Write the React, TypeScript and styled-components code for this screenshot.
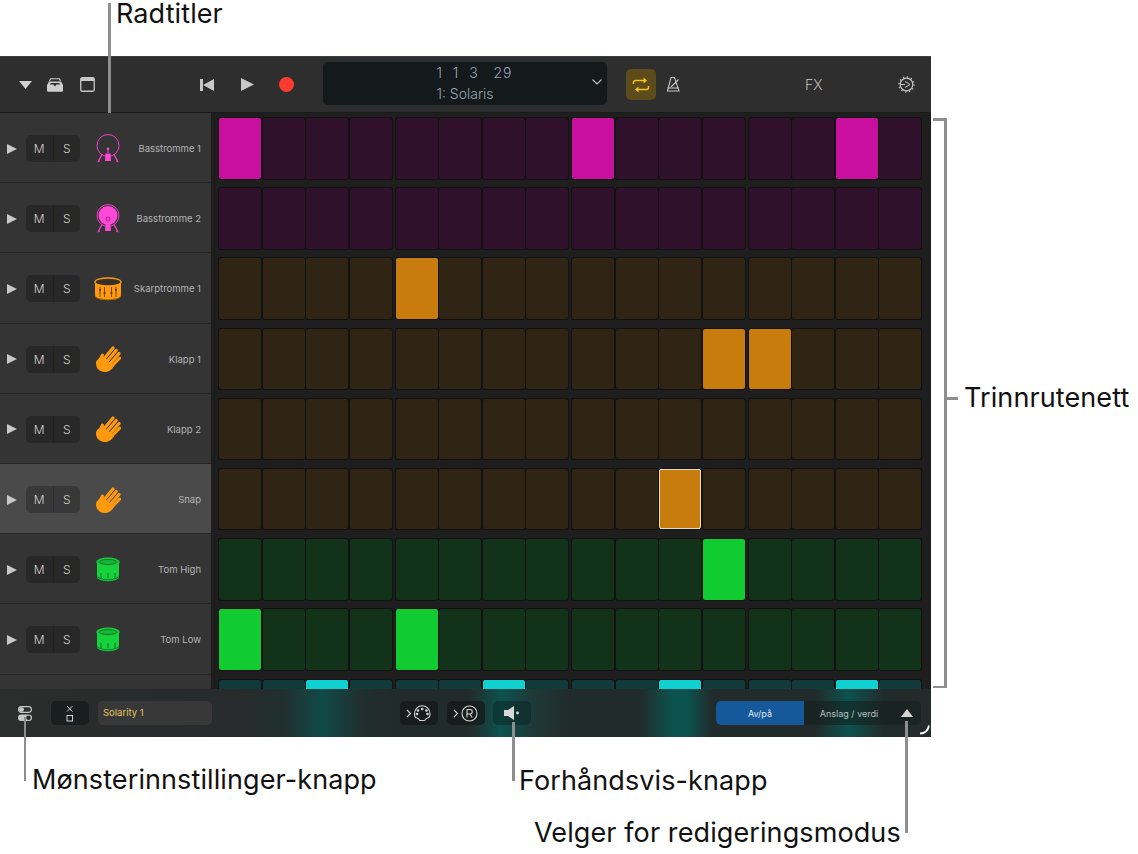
import React from 'react';
import styled, { createGlobalStyle } from 'styled-components';

const Global = createGlobalStyle`
  html, body { margin: 0; padding: 0; background: #fff; }
  body { font-family: Inter, "Liberation Sans", sans-serif; }
`;

const Page = styled.div`
  position: relative;
  width: 1138px;
  height: 854px;
  overflow: hidden;
  padding-top: 56px;
  box-sizing: border-box;
`;

const Window = styled.div`
  width: 931px;
  height: 681px;
  display: flex;
  flex-direction: column;
  background: #1e1e1e;
`;

const Toolbar = styled.div`
  height: 57px;
  flex: none;
  background: #2e2e2e;
  border-bottom: 1px solid #1a1a1a;
  box-sizing: border-box;
  display: grid;
  grid-template-columns: 323px 284px 19px 30px 1fr;
  align-items: center;
  border-top: 1px solid #3c3c3c;
`;

const ToolLeft = styled.div`
  display: flex;
  align-items: center;
  height: 100%;
  color: #c4c4c4;
  padding-left: 19px;
`;

const IconSlot = styled.span<{ $w: number; $mr: number }>`
  display: inline-flex;
  width: ${p => p.$w}px;
  margin-right: ${p => p.$mr}px;
  justify-content: center;
  align-items: center;
  flex: none;
`;

const Display = styled.div`
  height: 43px;
  margin-bottom: 2px;
  background: #14191c;
  border-radius: 5px;
  position: relative;
  display: flex;
  flex-direction: column;
  align-items: center;
  gap: 3px;
  padding-top: 2px;
  box-sizing: border-box;
  color: #97a5b1;
  font-size: 14px;
  line-height: 18px;
  font-weight: 300;
`;

const Position = styled.div`
  white-space: pre;
  letter-spacing: 1px;
  margin-left: 19px;
`;

const Chevron = styled.span`
  position: absolute;
  right: 3px;
  top: 15px;
  display: flex;
`;

const LoopButton = styled.div`
  grid-column: 4;
  width: 30px;
  height: 31px;
  border-radius: 5px;
  background: #5e4b1c;
  display: flex;
  align-items: center;
  justify-content: center;
`;

const ToolRight = styled.div`
  grid-column: 5;
  display: flex;
  align-items: center;
  color: #c0c0c0;
  padding-left: 10px;
`;

const FxLabel = styled.span`
  font-size: 14px;
  font-weight: 300;
  color: #b8b8b8;
  margin-left: 124px;
  width: 20px;
`;

const GearSlot = styled.span`
  display: flex;
  margin-left: 73px;
`;

const Body = styled.div`
  flex: 1;
  min-height: 0;
  overflow: hidden;
`;

const TrackRow = styled.div`
  display: flex;
  height: 70.2px;
`;

const Header = styled.div<{ $selected?: boolean }>`
  width: 211px;
  flex: none;
  box-sizing: border-box;
  background: ${p => (p.$selected ? '#4a4a4a' : '#343434')};
  border-bottom: 1px solid #262626;
  display: flex;
  align-items: center;
  padding: 2px 10px 0 7px;
`;

const PlayMark = styled.span`
  width: 0;
  height: 0;
  border-left: 10px solid #c8c8c8;
  border-top: 5.5px solid transparent;
  border-bottom: 5.5px solid transparent;
  margin-right: 9px;
  flex: none;
`;

const MuteSolo = styled.div`
  display: flex;
  width: 54px;
  height: 27px;
  border-radius: 5px;
  background: rgba(0, 0, 0, 0.23);
  overflow: hidden;
  flex: none;
`;

const MsButton = styled.span`
  flex: 1;
  display: flex;
  align-items: center;
  justify-content: center;
  font-size: 12px;
  font-weight: 300;
  color: #cfcfcf;
  & + & { border-left: 1px solid rgba(0, 0, 0, 0.15); }
`;

const TrackIcon = styled.span`
  width: 24px;
  margin-left: 16px;
  display: flex;
  justify-content: center;
  flex: none;
  & > svg { flex: none; }
`;

const TrackName = styled.span`
  flex: 1;
  text-align: right;
  font-size: 9.5px;
  color: #b4b4b4;
  white-space: nowrap;
`;

const Steps = styled.div`
  flex: 1;
  display: flex;
  gap: 4px;
  padding: 5px 10px 5px 8px;
  box-sizing: border-box;
  background: #1e1e1e;
`;

const Group = styled.div`
  flex: 1;
  display: grid;
  grid-template-columns: repeat(4, 1fr);
  gap: 1.5px;
`;

const Cell = styled.div<{ $bg: string; $sel?: boolean }>`
  background: ${p => p.$bg};
  border-radius: 2px;
  box-shadow: 0 0 0 1px #121212;
  height: 60.5px;
  box-sizing: border-box;
  border: ${p => (p.$sel ? '1px solid #e4dccb' : 'none')};
`;

const BottomBar = styled.div`
  height: 48px;
  flex: none;
  display: flex;
  align-items: center;
  position: relative;
  background: linear-gradient(90deg,
    #2c2d2d 0px, #272b2b 240px, #20302f 285px, #0f4a48 322px, #20302f 360px, #222b2b 390px,
    #222b2b 470px, #0c524e 500px, #1d3a38 532px, #222b2b 570px,
    #222b2b 640px, #0c524e 672px, #0c524e 688px, #222b2b 712px,
    #222b2b 815px, #0c524e 848px, #222b2b 885px, #252a2a 931px);
`;

const PatternSettings = styled.span`
  display: flex;
  margin-left: 18px;
  margin-right: 19px;
`;

const BarButton = styled.div<{ $glow?: boolean }>`
  width: 38px;
  height: 24px;
  border-radius: 5px;
  background: ${p => (p.$glow ? 'rgba(10,30,30,0.45)' : 'rgba(20,26,26,0.75)')};
  display: flex;
  align-items: center;
  justify-content: center;
  flex: none;
  color: #cfcfcf;
`;

const NameField = styled.div`
  width: 114px;
  height: 24px;
  margin-left: 9px;
  border-radius: 5px;
  background: #383838;
  color: #e2c65c;
  font-size: 9.5px;
  line-height: 24px;
  padding-left: 5px;
  box-sizing: border-box;
  margin-right: 188px;
`;

const CenterButtons = styled.div`
  display: flex;
  gap: 8.5px;
  margin-right: 185px;
`;

const Segments = styled.div`
  display: flex;
  width: 205px;
  height: 24px;
  border-radius: 5px;
  overflow: hidden;
  background: rgba(20, 30, 30, 0.55);
  font-size: 9px;
  flex: none;
`;

const Segment = styled.span<{ $on?: boolean }>`
  width: ${p => (p.$on ? 88 : 90)}px;
  display: flex;
  align-items: center;
  justify-content: center;
  background: ${p => (p.$on ? '#15599b' : 'transparent')};
  color: ${p => (p.$on ? '#dfe7ef' : '#b9c0c0')};
`;

const UpCaret = styled.span`
  flex: 1;
  display: flex;
  align-items: center;
  justify-content: center;
  border-left: 1px solid #1b2424;
  padding-right: 2px;
  &::before {
    content: '';
    border-left: 6.5px solid transparent;
    border-right: 6.5px solid transparent;
    border-bottom: 8px solid #d4d4d4;
  }
`;

const ResizeHandle = styled.svg`
  position: absolute;
  right: 1px;
  bottom: 2px;
`;

const Note = styled.span<{ $x: number; $y: number }>`
  position: absolute;
  left: ${p => p.$x}px;
  top: ${p => p.$y}px;
  font-family: Inter, "Liberation Sans", sans-serif;
  font-size: 27px;
  line-height: 28px;
  color: #111;
  white-space: nowrap;
  letter-spacing: 0.1px;
`;

const Rule = styled.i<{ $x: number; $y: number; $w: number; $h: number }>`
  position: absolute;
  left: ${p => p.$x}px;
  top: ${p => p.$y}px;
  width: ${p => p.$w}px;
  height: ${p => p.$h}px;
  background: #8e8e8e;
`;

const Kick = ({ filled }: { filled?: boolean }) => (
  <svg width="24" height="29" viewBox="0 0 24 29" fill="none" stroke="#f040c8">
    <circle cx="12" cy="11.5" r="11" strokeWidth="1" />
    {filled && <circle cx="12" cy="11.5" r="9.5" fill="#ff48d8" stroke="none" />}
    {filled ? (
      <circle cx="12" cy="15" r="2" stroke="#a0208a" strokeWidth="1" fill="#ff48d8" />
    ) : (
      <circle cx="12" cy="15" r="1.4" fill="#f040c8" stroke="none" />
    )}
    <path d="M12 16v3" strokeWidth="1" />
    <path d="M9.5 19.5h5L15 27H9z" fill="#ff48d8" stroke="none" />
    <path d="M6 20.5 2.5 27M18 20.5l3.5 6.5" strokeWidth="1.4" strokeLinecap="round" />
    <path d="M1.5 28l2.5-1M22.5 28 20 27" strokeWidth="1" />
  </svg>
);

const Snare = () => (
  <svg width="28" height="24" viewBox="0 0 28 24" fill="none">
    <path d="M1 5v14c0 2.300 6 4.200 13 4.200S27 21.300 27 19V5z" fill="#ff9a0e" />
    <ellipse cx="14" cy="5" rx="13" ry="4" fill="#38302a" stroke="#ff9a0e" strokeWidth="1.300" />
    <path d="M1 18.500c0 2.300 6 4.200 13 4.200s13-1.900 13-4.200" stroke="#8a5200" strokeWidth="0.800" />
    {[6, 10.500, 17.500, 22].map(x => (
      <g key={x}>
        <path d={`M${x} 10v10`} stroke="#5a3400" strokeWidth="0.800" />
        <circle cx={x} cy={x === 10.500 || x === 17.500 ? 16 : 13} r="1.100" fill="#5a3400" />
      </g>
    ))}
  </svg>
);

const Tom = () => (
  <svg width="24" height="25" viewBox="0 0 24 25" fill="none">
    <path d="M1 5v15c0 2.300 5 4.200 11 4.200S23 22.300 23 20V5z" fill="#16d23c" />
    <ellipse cx="12" cy="5" rx="11" ry="3.800" fill="#16b838" stroke="#16d23c" strokeWidth="1.200" />
    <ellipse cx="12" cy="5" rx="8.500" ry="2.500" stroke="#0a5a1e" strokeWidth="0.700" />
    <path d="M1 18.500c0 2.300 5 4.200 11 4.200s11-1.900 11-4.200" stroke="#0a6a20" strokeWidth="0.800" />
    {[5, 12, 19].map(x => (
      <path key={x} d={`M${x} 16v5`} stroke="#0a6a20" strokeWidth="0.900" />
    ))}
  </svg>
);

const Hand = () => (
  <svg width="26" height="26" viewBox="0 0 26 26" fill="none">
    <g stroke="#ff9a0e" strokeLinecap="round">
      <path d="M8 14 18 2" strokeWidth="3.200" />
      <path d="M11 16.500 21.200 4.500" strokeWidth="3.200" />
      <path d="M14 19 24 7.500" strokeWidth="3.200" />
      <path d="M16 21 24.800 12" strokeWidth="3" />
      <path d="M3 18 7.500 9" strokeWidth="3" />
    </g>
    <path d="M1 17c0-3 3-5 7-7l11 10c-2 3.500-5 6-9 6-5.500 0-9-3.500-9-9z" fill="#ff9a0e" />
  </svg>
);

type Track = { name: string; kind: 'k1' | 'k2' | 'sn' | 'hand' | 'tom' | 'none'; on: number[]; bg: string; fg: string; sel?: number };

const tracks: Track[] = [
  { name: 'Basstromme 1', kind: 'k1', on: [0, 8, 14], bg: '#30112c', fg: '#c90f9e' },
  { name: 'Basstromme 2', kind: 'k2', on: [], bg: '#30112c', fg: '#c90f9e' },
  { name: 'Skarptromme 1', kind: 'sn', on: [4], bg: '#302414', fg: '#c97c0e' },
  { name: 'Klapp 1', kind: 'hand', on: [11, 12], bg: '#302414', fg: '#c97c0e' },
  { name: 'Klapp 2', kind: 'hand', on: [], bg: '#302414', fg: '#c97c0e' },
  { name: 'Snap', kind: 'hand', on: [10], bg: '#302414', fg: '#c97c0e', sel: 10 },
  { name: 'Tom High', kind: 'tom', on: [11], bg: '#12321a', fg: '#10cc30' },
  { name: 'Tom Low', kind: 'tom', on: [0, 4], bg: '#12321a', fg: '#10cc30' },
  { name: '', kind: 'none', on: [2, 6, 10, 14], bg: '#123a3a', fg: '#10d0d0' },
];

const iconFor = (k: Track['kind']) => {
  if (k === 'k1') return <Kick />;
  if (k === 'k2') return <Kick filled />;
  if (k === 'sn') return <Snare />;
  if (k === 'hand') return <Hand />;
  return <Tom />;
};

const groups = [0, 1, 2, 3];

export default function App() {
  return (
    <Page>
      <Global />
      <Window>
        <Toolbar>
          <ToolLeft>
            <IconSlot $w={13} $mr={14}>
              <svg width="13" height="8"><path d="M0 0h13L6.500 8z" fill="#d0d0d0" /></svg>
            </IconSlot>
            <IconSlot $w={18} $mr={16}>
              <svg width="18" height="14" viewBox="0 0 18 14" fill="none">
                <path d="M3.500 3 4.500.8h9L14.500 3" stroke="#cfcfcf" strokeWidth="1.100" />
                <path d="M1 7 3 3.500h12L17 7v5.500a1.300 1.300 0 0 1-1.300 1.300H2.300A1.300 1.300 0 0 1 1 12.500z" fill="#cfcfcf" />
                <path d="M3.800 6.500 4.800 5h8.400l1 1.500h-3.700L9 8.500 7.500 6.500z" fill="#2e2e2e" />
              </svg>
            </IconSlot>
            <IconSlot $w={15} $mr={105}>
              <svg width="15" height="15" viewBox="0 0 15 15" fill="none">
                <rect x="0.750" y="0.750" width="13.500" height="13.500" rx="1.500" stroke="#c8c8c8" strokeWidth="1.300" />
                <rect x="1" y="1" width="13" height="3" fill="#c8c8c8" />
              </svg>
            </IconSlot>
            <IconSlot $w={14} $mr={27}>
              <svg width="14" height="12"><path d="M0 0h3v12H0zM14 0v12L3 6z" fill="#c8c8c8" /></svg>
            </IconSlot>
            <IconSlot $w={13} $mr={24.500}>
              <svg width="13" height="13"><path d="M0 0l13 6.500L0 13z" fill="#c8c8c8" /></svg>
            </IconSlot>
            <IconSlot $w={15} $mr={0}>
              <svg width="15" height="15"><circle cx="7.500" cy="7.500" r="7.500" fill="#ff3b30" /></svg>
            </IconSlot>
          </ToolLeft>
          <Display>
            <Position>{'1  1  3   29'}</Position>
            <div>1: Solaris</div>
            <Chevron>
              <svg width="14" height="10" viewBox="0 0 14 10" fill="none">
                <path d="M2.500 2.500 7 7l4.500-4.500" stroke="#b8c0c6" strokeWidth="1.200" />
              </svg>
            </Chevron>
          </Display>
          <LoopButton>
            <svg width="18" height="16" viewBox="0 0 18 16" fill="none" stroke="#f6c21c" strokeWidth="1.500">
              <path d="M1.500 7V5.500a2 2 0 0 1 2-2H14" />
              <path d="M11.500 0.500 15 3.500l-3.500 3" fill="#f6c21c" stroke="none" />
              <path d="M16.500 9v1.500a2 2 0 0 1-2 2H4" />
              <path d="M6.500 9.500 3 12.500l3.500 3" fill="#f6c21c" stroke="none" />
            </svg>
          </LoopButton>
          <ToolRight>
            <svg width="15" height="17" viewBox="0 0 15 17" fill="none" stroke="#c4c4c4" strokeWidth="1.100">
              <path d="M5 1.500h3.500L13 15H1.500z" />
              <path d="M1.500 12h11.500" />
              <path d="M5 11 12.500 3.500" />
            </svg>
            <FxLabel>FX</FxLabel>
            <GearSlot>
              <svg width="17" height="17" viewBox="0 0 17 17" fill="none" stroke="#c4c4c4">
                <circle cx="8.500" cy="8.500" r="6.300" strokeWidth="1.200" />
                <circle cx="8.500" cy="8.500" r="7.600" strokeWidth="1.300" strokeDasharray="1.300 2.700" />
                <path d="M7 5.500 12 8.500 7 11.500" strokeWidth="1" />
                <path d="M2.500 8.500H7" strokeWidth="1" />
              </svg>
            </GearSlot>
          </ToolRight>
        </Toolbar>
        <Body>
          {tracks.map((t, r) => (
            <TrackRow key={r}>
              <Header $selected={t.name === 'Snap'}>
                {t.kind !== 'none' && (
                  <>
                    <PlayMark />
                    <MuteSolo>
                      <MsButton>M</MsButton>
                      <MsButton>S</MsButton>
                    </MuteSolo>
                    <TrackIcon>{iconFor(t.kind)}</TrackIcon>
                    <TrackName>{t.name}</TrackName>
                  </>
                )}
              </Header>
              <Steps>
                {groups.map(g => (
                  <Group key={g}>
                    {groups.map(c => {
                      const i = g * 4 + c;
                      return <Cell key={c} $bg={t.on.includes(i) ? t.fg : t.bg} $sel={t.sel === i} />;
                    })}
                  </Group>
                ))}
              </Steps>
            </TrackRow>
          ))}
        </Body>
        <BottomBar>
          <PatternSettings>
            <svg width="14" height="15" viewBox="0 0 14 15" fill="none">
              <rect x="0.600" y="0.600" width="12.800" height="5.800" rx="2.900" stroke="#c8c8c8" strokeWidth="1.100" />
              <rect x="1" y="1.200" width="5" height="4.600" rx="2.300" fill="#c8c8c8" />
              <rect x="0" y="8.500" width="14" height="6.500" rx="3.250" fill="#c8c8c8" />
              <circle cx="10.500" cy="11.750" r="2.300" fill="#2b2d2d" />
            </svg>
          </PatternSettings>
          <BarButton>
            <svg width="8" height="17" viewBox="0 0 8 17" fill="none" stroke="#d0d0d0" strokeWidth="1">
              <path d="M1 1l5.500 5.500M6.500 1 1 6.500" />
              <rect x="1" y="10.500" width="5.500" height="5.500" />
            </svg>
          </BarButton>
          <NameField>Solarity 1</NameField>
          <CenterButtons>
            <BarButton>
              <svg width="26" height="17" viewBox="0 0 26 17" fill="none" stroke="#d4d4d4" strokeWidth="1.100">
                <path d="M1 5l3.500 3.500L1 12" />
                <path d="M14 15.500c-1 0-1.200-2.500-3-2.500-2 0-2.500-1-2.500-4.500A7.500 7.500 0 0 1 24 8.500c0 3.500-.5 4.500-2.500 4.500-1.800 0-2 2.500-3 2.500z" />
                <circle cx="12" cy="5.500" r=".8" fill="#d4d4d4" /><circle cx="16.200" cy="4" r=".8" fill="#d4d4d4" /><circle cx="20.500" cy="5.500" r=".8" fill="#d4d4d4" /><circle cx="11" cy="9" r=".8" fill="#d4d4d4" /><circle cx="21.500" cy="9" r=".8" fill="#d4d4d4" />
              </svg>
            </BarButton>
            <BarButton>
              <svg width="26" height="17" viewBox="0 0 26 17" fill="none" stroke="#d4d4d4" strokeWidth="1.100">
                <path d="M1 5l3.500 3.500L1 12" />
                <circle cx="16.500" cy="8.500" r="7.500" />
                <path d="M14 12.500v-8h3a2.200 2.200 0 0 1 0 4.500h-3M16.800 9l2.400 3.500" />
              </svg>
            </BarButton>
            <BarButton $glow>
              <svg width="16" height="14" viewBox="0 0 16 14" fill="none">
                <path d="M0 4h4l6-4v14l-6-4H0z" fill="#d8d8d8" />
                <circle cx="13.500" cy="7" r="1.400" fill="#d8d8d8" />
              </svg>
            </BarButton>
          </CenterButtons>
          <Segments>
            <Segment $on>Av/på</Segment>
            <Segment>Anslag / verdi</Segment>
            <UpCaret />
          </Segments>
          <ResizeHandle width="11" height="10" viewBox="0 0 11 10" fill="none">
            <path d="M1 8.500c4.500 0 8-3 9-8" stroke="#fff" strokeWidth="1.800" />
          </ResizeHandle>
        </BottomBar>
      </Window>

      <Note $x={116} $y={0}>Radtitler</Note>
      <Rule $x={108} $y={3} $w={2.500} $h={110} />

      <Note $x={964} $y={384}>Trinnrutenett</Note>
      <Rule $x={933} $y={118} $w={13} $h={2.500} />
      <Rule $x={944} $y={118} $w={2.500} $h={570} />
      <Rule $x={933} $y={685.500} $w={13} $h={2.500} />
      <Rule $x={945} $y={397} $w={13} $h={2.500} />

      <Note $x={32} $y={766}>Mønsterinnstillinger-knapp</Note>
      <Rule $x={23.500} $y={717} $w={2.500} $h={64} />
      <Note $x={519} $y={767}>Forhåndsvis-knapp</Note>
      <Rule $x={512} $y={722} $w={2.500} $h={59} />
      <Note $x={534} $y={819}>Velger for redigeringsmodus</Note>
      <Rule $x={905} $y={721} $w={2.500} $h={112} />
    </Page>
  );
}
